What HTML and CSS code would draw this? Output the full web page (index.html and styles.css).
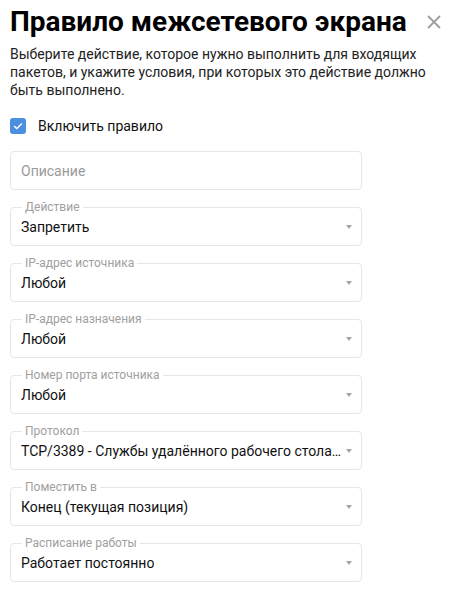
FILE: index.html
```html
<!DOCTYPE html>
<html lang="ru">
<head>
<meta charset="utf-8">
<link rel="stylesheet" href="styles.css">
</head>
<body>
<div class="dialog">
  <div class="header">
    <h1 class="title">Правило межсетевого экрана</h1>
    <button class="close" aria-label="Закрыть">
      <svg width="14" height="14" viewBox="0 0 14 14"><path d="M1 1L13 13M13 1L1 13" stroke="#9e9e9e" stroke-width="1.8" fill="none"/></svg>
    </button>
  </div>
  <p class="desc">Выберите действие, которое нужно выполнить для входящих пакетов, и укажите условия, при которых это действие должно быть выполнено.</p>
  <label class="check">
    <span class="box"><svg width="10" height="8" viewBox="0 0 10 8"><path d="M1 4L3.8 6.6L9 1.4" stroke="#fff" stroke-width="1.4" fill="none"/></svg></span>
    <span class="check-label">Включить правило</span>
  </label>
  <div class="form">
    <div class="input"><span class="placeholder">Описание</span></div>
    <div class="field"><span class="legend">Действие</span><span class="value">Запретить</span><span class="arrow"></span></div>
    <div class="field"><span class="legend">IP-адрес источника</span><span class="value">Любой</span><span class="arrow"></span></div>
    <div class="field"><span class="legend">IP-адрес назначения</span><span class="value">Любой</span><span class="arrow"></span></div>
    <div class="field"><span class="legend">Номер порта источника</span><span class="value">Любой</span><span class="arrow"></span></div>
    <div class="field"><span class="legend">Протокол</span><span class="value">TCP/3389 - Службы удалённого рабочего стола (RDP)</span><span class="arrow"></span></div>
    <div class="field"><span class="legend">Поместить в</span><span class="value">Конец (текущая позиция)</span><span class="arrow"></span></div>
    <div class="field"><span class="legend">Расписание работы</span><span class="value">Работает постоянно</span><span class="arrow"></span></div>
  </div>
</div>
</body>
</html>
```
FILE: styles.css
```css
html, body { margin: 0; padding: 0; background: #fff; }
body { font-family: Roboto, "Liberation Sans", sans-serif; color: #000; }
.dialog { padding: 4px 10px 10px 10px; }
.header { display: flex; align-items: center; justify-content: space-between; }
.title { margin: 0; font-size: 28px; font-weight: 700; line-height: 36px; color: #000; }
.close { border: 0; background: none; padding: 0; margin-right: 0; width: 14px; height: 14px; display: flex; cursor: pointer; }
.desc { margin: 5px 0 0 0; font-size: 14px; line-height: 18px; color: #222; }
.check { display: flex; align-items: center; margin-top: 18px; height: 18px; }
.box { width: 16px; height: 16px; border-radius: 3px; background: #4a8fe0; display: flex; align-items: center; justify-content: center; }
.check-label { margin-left: 12px; font-size: 14px; color: #111; }
.form { margin-top: 16px; width: 352px; display: flex; flex-direction: column; gap: 17px; }
.input, .field { box-sizing: border-box; height: 39px; border: 1px solid #e6e6e6; border-radius: 4px; display: flex; align-items: center; position: relative; padding: 0 10px; }
.placeholder { font-size: 14px; color: #9a9a9a; }
.field { padding-right: 18px; }
.legend { position: absolute; left: 11px; top: -9px; padding: 0 3px; background: #fff; font-size: 12px; line-height: 16px; color: #a0a0a0; }
.value { font-size: 14px; color: #111; white-space: nowrap; overflow: hidden; text-overflow: ellipsis; }
.arrow { position: absolute; right: 9px; top: 17px; width: 0; height: 0; border-left: 3px solid transparent; border-right: 3px solid transparent; border-top: 4px solid #a6a6a6; }
```
